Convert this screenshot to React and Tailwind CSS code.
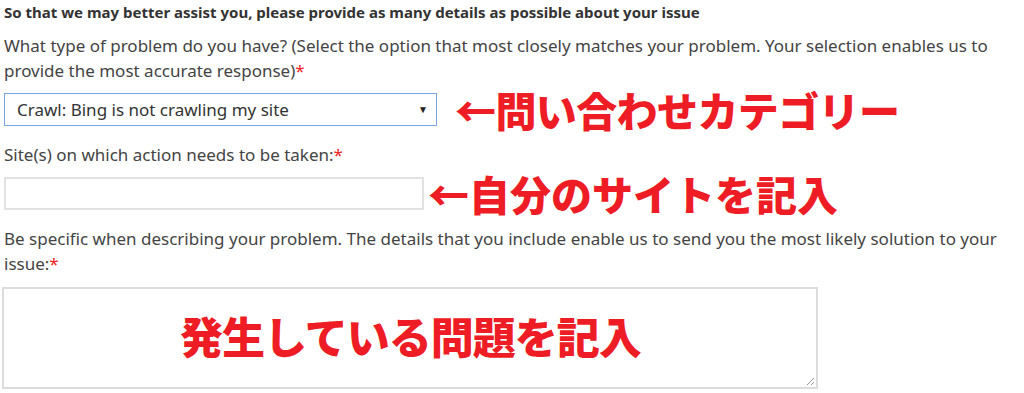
export default function App() {
    const label = "text-[17px] leading-[25px] text-[#444]"
    const mark = "font-['Noto_Sans_CJK_JP',sans-serif] font-black text-[#ee1c25] whitespace-nowrap"

    return (
        <div className="w-[1024px] h-[393px] overflow-hidden bg-white px-[4px] pt-[2px] font-['Noto_Sans','Open_Sans',sans-serif]">
            <p className="text-[15px] leading-[20px] font-bold text-[#333]">
                So that we may better assist you, please provide as many details as possible about your issue
            </p>

            {/* problem type */}
            <p className={`${label} mt-[11px]`}>
                What type of problem do you have? (Select the option that most closely matches your problem. Your selection enables us to provide the most accurate response)
                <span className="text-[#e22]">*</span>
            </p>
            <div className="mt-[10px] flex h-[33px] items-center gap-[18px]">
                <div className="flex h-[33px] w-[433px] shrink-0 items-center justify-between border-[1.5px] border-[#7aa7e9] pl-[12px] pr-[8px] text-[17px] text-[#333]">
                    <span>Crawl: Bing is not crawling my site</span>
                    <span className="text-[10px] text-[#222]">▼</span>
                </div>
                <span className={`${mark} text-[41px] leading-[33px] tracking-[-0.6px]`}>←問い合わせカテゴリー</span>
            </div>

            {/* sites */}
            <p className={`${label} mt-[16px]`}>
                Site(s) on which action needs to be taken:<span className="text-[#e22]">*</span>
            </p>
            <div className="mt-[10px] flex h-[33px] items-center gap-[4px]">
                <div className="h-[33px] w-[420px] shrink-0 border-2 border-[#e2e2e2]" />
                <span className={`${mark} text-[41px] leading-[33px]`}>←自分のサイトを記入</span>
            </div>

            {/* details */}
            <p className={`${label} mt-[16px] text-[16px]`}>
                Be specific when describing your problem. The details that you include enable us to send you the most likely solution to your issue:
                <span className="text-[#e22]">*</span>
            </p>
            <div className="relative -ml-[2px] mt-[11px] h-[102px] w-[816px] border-2 border-[#dcdcdc]">
                <span className={`${mark} absolute left-[176px] top-[22px] text-[43px] leading-[48px] tracking-[-1px]`}>
                    発生している問題を記入
                </span>
                <svg className="absolute bottom-[1px] right-[1px]" width="10" height="10" viewBox="0 0 10 10">
                    <path d="M9 2 L2 9 M9 6 L6 9" stroke="#999" strokeWidth="1" />
                </svg>
            </div>
        </div>
    )
}
